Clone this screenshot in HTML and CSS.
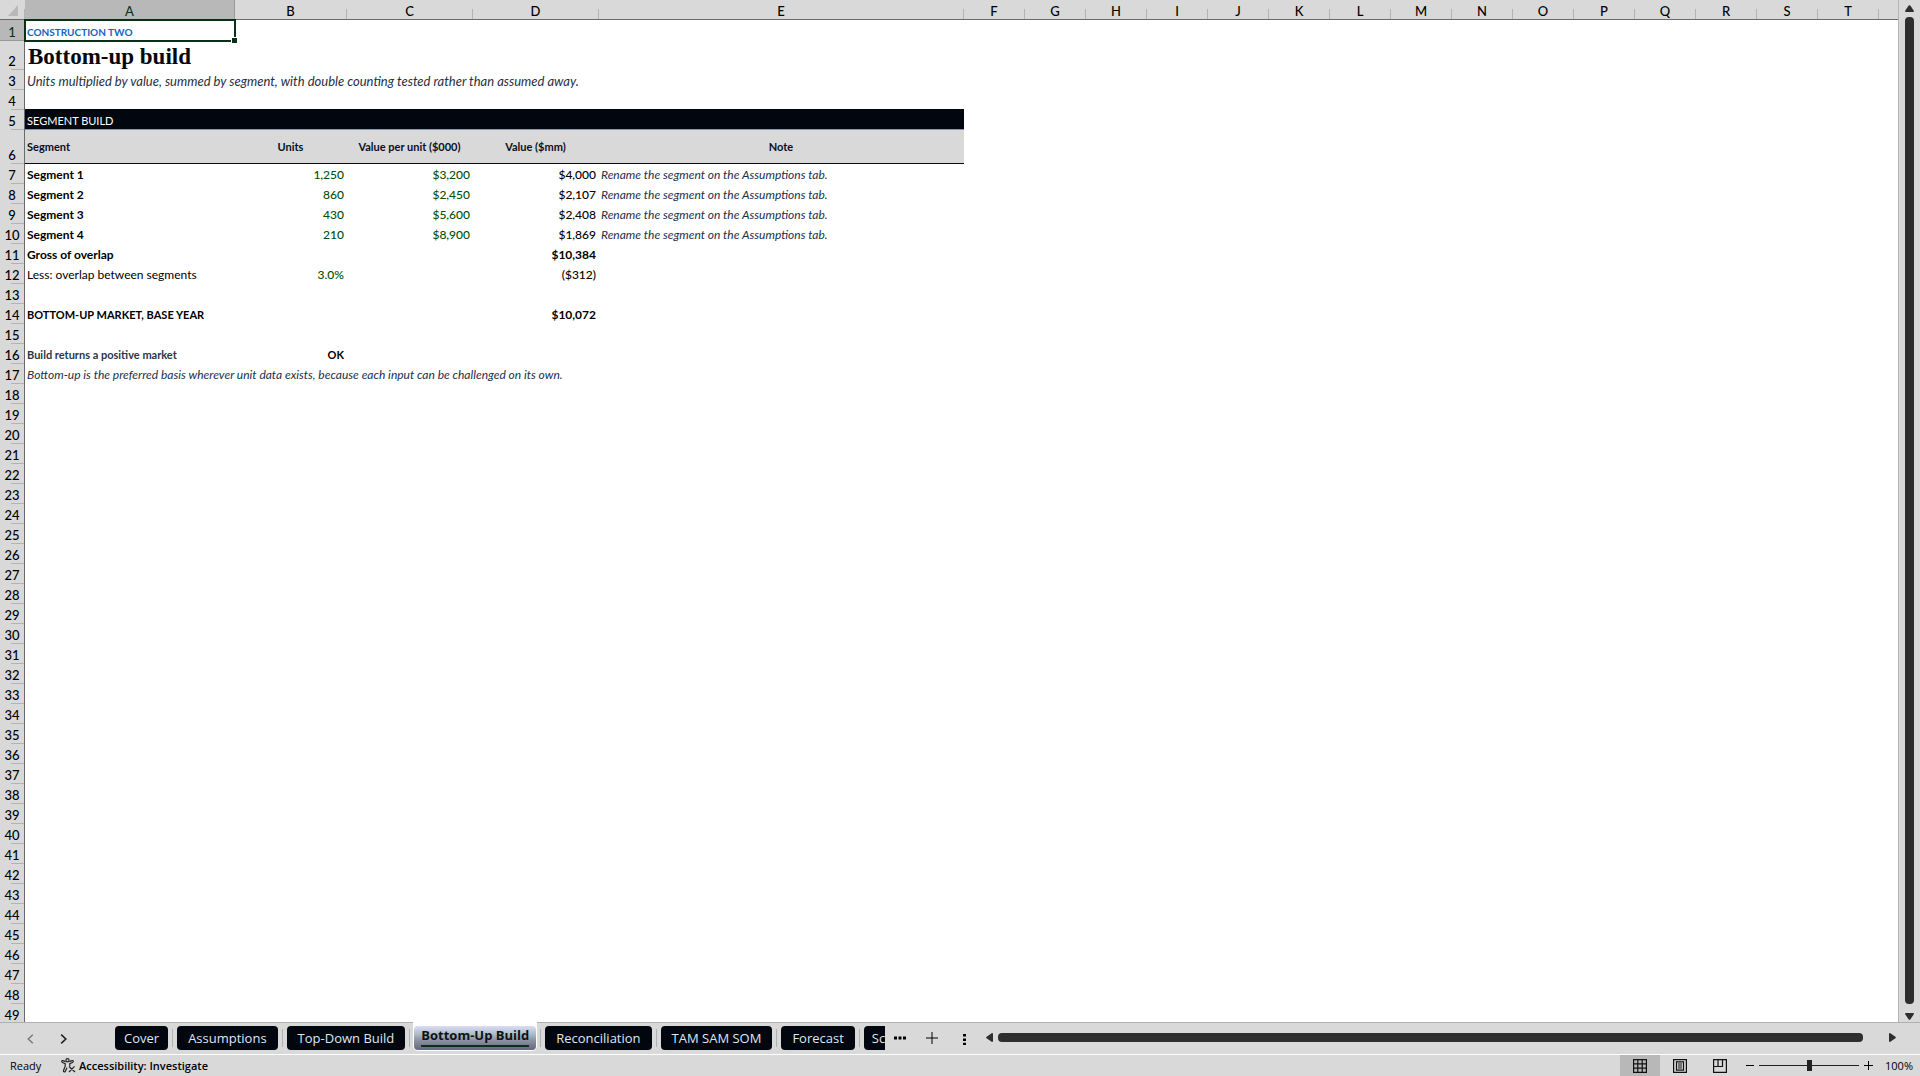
FILE: index.html
```
<!DOCTYPE html>
<html lang="en">
<head>
<meta charset="utf-8">
<title>Bottom-Up Build</title>
<link rel="stylesheet" href="styles.css">
</head>
<body>
<main class="workspace">
  <div class="sheet">
    <table class="grid">
      <colgroup>
        <col class="c-head"><col class="c-a"><col class="c-b"><col class="c-c"><col class="c-c"><col class="c-e">
        <col class="c-std" span="15"><col>
      </colgroup>
      <thead>
        <tr>
          <th class="corner"><svg width="10" height="11" viewBox="0 0 10 11"><path d="M10 0V11H0Z" fill="#b8b8b8"/></svg></th>
          <th class="selected">A</th><th>B</th><th>C</th><th>D</th><th>E</th><th>F</th><th>G</th><th>H</th><th>I</th><th>J</th><th>K</th><th>L</th><th>M</th><th>N</th><th>O</th><th>P</th><th>Q</th><th>R</th><th>S</th><th>T</th><th class="rest"></th>
        </tr>
      </thead>
      <tbody>
        <tr class="r-eyebrow"><th class="selected">1</th><td class="active-cell eyebrow">CONSTRUCTION TWO<span class="handle"></span></td><td colspan="20"></td></tr>
        <tr class="r-title"><th>2</th><td colspan="21" class="title">Bottom-up build</td></tr>
        <tr><th>3</th><td colspan="21" class="subtitle">Units multiplied by value, summed by segment, with double counting tested rather than assumed away.</td></tr>
        <tr><th>4</th><td colspan="21"></td></tr>
        <tr><th>5</th><td colspan="5" class="band">SEGMENT BUILD</td><td colspan="16"></td></tr>
        <tr class="r-heads"><th>6</th><td class="head first">Segment</td><td class="head">Units</td><td class="head">Value per unit ($000)</td><td class="head">Value ($mm)</td><td class="head">Note</td><td colspan="16"></td></tr>
        <tr><th>7</th><td class="strong">Segment 1</td><td class="num input">1,250</td><td class="num input">$3,200</td><td class="num">$4,000</td><td class="note">Rename the segment on the Assumptions tab.</td><td colspan="16"></td></tr>
        <tr><th>8</th><td class="strong">Segment 2</td><td class="num input">860</td><td class="num input">$2,450</td><td class="num">$2,107</td><td class="note">Rename the segment on the Assumptions tab.</td><td colspan="16"></td></tr>
        <tr><th>9</th><td class="strong">Segment 3</td><td class="num input">430</td><td class="num input">$5,600</td><td class="num">$2,408</td><td class="note">Rename the segment on the Assumptions tab.</td><td colspan="16"></td></tr>
        <tr><th>10</th><td class="strong">Segment 4</td><td class="num input">210</td><td class="num input">$8,900</td><td class="num">$1,869</td><td class="note">Rename the segment on the Assumptions tab.</td><td colspan="16"></td></tr>
        <tr><th>11</th><td class="strong">Gross of overlap</td><td></td><td></td><td class="num strong">$10,384</td><td colspan="17"></td></tr>
        <tr><th>12</th><td>Less: overlap between segments</td><td class="num input">3.0%</td><td></td><td class="num">($312)</td><td colspan="17"></td></tr>
        <tr><th>13</th><td colspan="21"></td></tr>
        <tr><th>14</th><td class="strong small">BOTTOM-UP MARKET, BASE YEAR</td><td></td><td></td><td class="num strong">$10,072</td><td colspan="17"></td></tr>
        <tr><th>15</th><td colspan="21"></td></tr>
        <tr><th>16</th><td class="check">Build returns a positive market</td><td class="num strong small">OK</td><td colspan="19"></td></tr>
        <tr><th>17</th><td colspan="21" class="note">Bottom-up is the preferred basis wherever unit data exists, because each input can be challenged on its own.</td></tr>
        <tr><th>18</th><td colspan="21"></td></tr>
        <tr><th>19</th><td colspan="21"></td></tr>
        <tr><th>20</th><td colspan="21"></td></tr>
        <tr><th>21</th><td colspan="21"></td></tr>
        <tr><th>22</th><td colspan="21"></td></tr>
        <tr><th>23</th><td colspan="21"></td></tr>
        <tr><th>24</th><td colspan="21"></td></tr>
        <tr><th>25</th><td colspan="21"></td></tr>
        <tr><th>26</th><td colspan="21"></td></tr>
        <tr><th>27</th><td colspan="21"></td></tr>
        <tr><th>28</th><td colspan="21"></td></tr>
        <tr><th>29</th><td colspan="21"></td></tr>
        <tr><th>30</th><td colspan="21"></td></tr>
        <tr><th>31</th><td colspan="21"></td></tr>
        <tr><th>32</th><td colspan="21"></td></tr>
        <tr><th>33</th><td colspan="21"></td></tr>
        <tr><th>34</th><td colspan="21"></td></tr>
        <tr><th>35</th><td colspan="21"></td></tr>
        <tr><th>36</th><td colspan="21"></td></tr>
        <tr><th>37</th><td colspan="21"></td></tr>
        <tr><th>38</th><td colspan="21"></td></tr>
        <tr><th>39</th><td colspan="21"></td></tr>
        <tr><th>40</th><td colspan="21"></td></tr>
        <tr><th>41</th><td colspan="21"></td></tr>
        <tr><th>42</th><td colspan="21"></td></tr>
        <tr><th>43</th><td colspan="21"></td></tr>
        <tr><th>44</th><td colspan="21"></td></tr>
        <tr><th>45</th><td colspan="21"></td></tr>
        <tr><th>46</th><td colspan="21"></td></tr>
        <tr><th>47</th><td colspan="21"></td></tr>
        <tr><th>48</th><td colspan="21"></td></tr>
        <tr><th>49</th><td colspan="21"></td></tr>
      </tbody>
    </table>
  </div>
  <div class="vscroll">
    <button type="button" aria-label="Scroll up"><svg width="9" height="7" viewBox="0 0 9 7"><path d="M3.7 .6Q4.5-.3 5.3 .6L9 6Q9 7 8 7H1Q0 7 0 6Z"/></svg></button>
    <div class="vthumb"></div>
    <button type="button" aria-label="Scroll down"><svg width="9" height="7" viewBox="0 0 9 7"><path d="M3.7 6.4Q4.5 7.3 5.3 6.4L9 1Q9 0 8 0H1Q0 0 0 1Z"/></svg></button>
  </div>
</main>

<nav class="tabbar" aria-label="Sheets">
  <div class="tabnav">
    <button type="button" aria-label="Previous sheet"><svg width="7" height="10" viewBox="0 0 7 10"><path d="M5.8 .7 1.2 5l4.6 4.3" fill="none" stroke="#777" stroke-width="1.4"/></svg></button>
    <button type="button" aria-label="Next sheet"><svg width="7" height="10" viewBox="0 0 7 10"><path d="M1.2 .7 5.8 5 1.2 9.3" fill="none" stroke="#222" stroke-width="1.6"/></svg></button>
  </div>
  <div class="tabs">
    <button type="button" class="tab">Cover</button>
    <i class="sep"></i>
    <button type="button" class="tab">Assumptions</button>
    <i class="sep"></i>
    <button type="button" class="tab">Top-Down Build</button>
    <i class="sep"></i>
    <button type="button" class="tab current"><span>Bottom-Up Build</span></button>
    <i class="sep"></i>
    <button type="button" class="tab">Reconciliation</button>
    <i class="sep"></i>
    <button type="button" class="tab">TAM SAM SOM</button>
    <i class="sep"></i>
    <button type="button" class="tab">Forecast</button>
    <i class="sep"></i>
    <button type="button" class="tab cut">Sc</button>
  </div>
  <div class="tabtools">
    <button type="button" aria-label="More sheets"><svg width="12" height="4" viewBox="0 0 12 4"><path d="M0 .5h3v3H0zM4.500 .5h3v3h-3zM9 .5h3v3H9z"/></svg></button>
    <button type="button" aria-label="New sheet"><svg width="12" height="12" viewBox="0 0 12 12"><path d="M5.500 0h1v5.500H12v1H6.500V12h-1V6.500H0v-1h5.500z"/></svg></button>
    <button type="button" aria-label="Resize tab area"><svg width="3" height="11" viewBox="0 0 3 11"><path d="M0 0h3v2.500H0zM0 4.500h3V7H0zM0 8.800h3V11H0z"/></svg></button>
  </div>
  <div class="hscroll">
    <button type="button" aria-label="Scroll left"><svg width="7" height="9" viewBox="0 0 7 9"><path d="M.6 3.700Q-.3 4.500 .6 5.300L6 9Q7 9 7 8V1Q7 0 6 0Z"/></svg></button>
    <div class="hthumb"></div>
    <button type="button" aria-label="Scroll right"><svg width="7" height="9" viewBox="0 0 7 9"><path d="M6.400 3.700Q7.300 4.500 6.400 5.300L1 9Q0 9 0 8V1Q0 0 1 0Z"/></svg></button>
  </div>
</nav>

<footer class="status">
  <span class="ready">Ready</span>
  <button type="button" class="access">
    <svg width="15" height="15" viewBox="0 0 15 15" fill="none" stroke="#222" stroke-width="1.200"><circle cx="6.500" cy="2.300" r="1.600"/><path d="M4.600 3.600 2 2.600Q.6 2.500.7 3.600q0 .6.800.9L4.200 5.600v2.600L2.500 12.400q-.3 1.200.7 1.500.9.200 1.300-.8L6 9.800M8.400 3.600 11 2.600q1.400-.1 1.300 1 0 .6-.8.900L8.800 5.600v2.300M8 8.500l6 5.500M13.500 8.300 8 14"/></svg>
    Accessibility: Investigate
  </button>
  <div class="views">
    <button type="button" class="on" aria-label="Normal"><svg width="14" height="14" viewBox="0 0 14 14" fill="none" stroke="#111" stroke-width="1.200"><path d="M.6.600h12.800v12.800H.6zM4.800.600v12.800M9.200.600v12.800M.6 4.800h12.800M.6 9.200h12.800"/></svg></button>
    <button type="button" aria-label="Page layout"><svg width="14" height="14" viewBox="0 0 14 14" fill="none" stroke="#111" stroke-width="1.200"><path d="M.6.600h12.800v12.800H.6zM3.500 2.800h7v8.400h-7zM5 5h4M5 7h4M5 9h4"/></svg></button>
    <button type="button" aria-label="Page break preview"><svg width="14" height="14" viewBox="0 0 14 14" fill="none" stroke="#111" stroke-width="1.200"><path d="M.6.600h12.800v12.800H.6zM.6 7.500h8.900V.600M5 .600v6.900"/></svg></button>
  </div>
  <div class="zoom">
    <button type="button" aria-label="Zoom out"><svg width="8" height="9" viewBox="0 0 8 9"><path d="M0 4h8v1H0z"/></svg></button>
    <input type="range" min="0" max="200" value="100" aria-label="Zoom">
    <button type="button" aria-label="Zoom in"><svg width="9" height="9" viewBox="0 0 9 9"><path d="M4 0h1v4h4v1H5v4H4V5H0V4h4z"/></svg></button>
  </div>
  <button type="button" class="percent">100%</button>
</footer>
</body>
</html>
```
FILE: styles.css
```
* { box-sizing: border-box; }

body {
  margin: 0;
  height: 100vh;
  display: flex;
  flex-direction: column;
  background: #d9d9d9;
  color: #000;
  font: 12px/18px Lato, sans-serif;
  overflow: hidden;
}

button {
  border: 0;
  padding: 0;
  background: none;
  color: inherit;
  font: inherit;
  white-space: nowrap;
}

svg { display: block; }

/* Worksheet */
.workspace {
  flex: 1;
  min-height: 0;
  display: flex;
}

.sheet {
  flex: 1;
  min-width: 0;
  overflow: hidden;
  background: linear-gradient(#d9d9d9, #d9d9d9) 0 0 / 100% 19px no-repeat #fff;
  border-right: 1px solid #b5b5b5;
}

.grid {
  width: 100%;
  table-layout: fixed;
  border-collapse: separate;
  border-spacing: 0;
}

.c-head { width: 25px; }
.c-a { width: 210px; }
.c-b { width: 112px; }
.c-c { width: 126px; }
.c-e { width: 365px; }
.c-std { width: 61px; }

.grid th {
  padding: 0 1px 0 0;
  font-size: 13px;
  font-weight: 500;
  text-align: center;
  vertical-align: bottom;
  background-color: #d9d9d9;
  background-repeat: no-repeat;
  background-image: linear-gradient(#b3b3b3, #b3b3b3);
}

.grid thead th {
  height: 20px;
  background-position: right bottom;
  background-size: 1px 11px;
  box-shadow: inset 0 -1px #6a6a6a;
}

.grid tbody th {
  background-position: right bottom;
  background-size: 14px 1px;
  box-shadow: inset -1px 0 #6a6a6a;
}

.grid thead th.rest { background-image: none; }
.grid .selected { background-color: #b8b8b8; color: #0b3018; }
.grid thead .selected { background-size: 1px 100%; background-image: linear-gradient(#999, #999); }
.grid tbody .selected { background-size: 100% 1px; background-image: linear-gradient(#999, #999); }
.corner svg { margin: 0 0 4px 8px; }

.grid td {
  height: 20px;
  padding: 0 3px 0 2px;
  vertical-align: bottom;
  white-space: nowrap;
}

.grid .r-eyebrow td { height: 21px; }
.grid .r-title td { height: 29px; }
.grid .r-heads td { height: 34px; }

.grid .eyebrow { color: #1463c4; font-size: 10px; font-weight: 700; }
.grid .title { font: 700 23px/26px "Liberation Serif", serif; color: #05070f; padding-left: 3px; }
.grid .subtitle { font-size: 13px; font-style: italic; color: #26303f; }
.grid .band { background: #02070f; color: #fff; font-size: 11px; box-shadow: inset 0 -1px #8494a8, 0 -1px #02070f; }
.grid .head {
  background: #d9d9d9;
  box-shadow: inset 0 -1px #0a0a1e;
  color: #0a0f24;
  font-size: 11px;
  font-weight: 700;
  text-align: center;
  vertical-align: middle;
}
.grid .head.first { text-align: left; }
.grid .strong { font-weight: 700; color: #000; }
.grid .small { font-size: 11px; }
.grid .num { text-align: right; font-weight: 500; }
.grid .num.strong { font-weight: 700; }
.grid .input { color: #00500a; }
.grid .note { font-style: italic; color: #22304a; }
.grid .check { font-size: 11px; font-weight: 700; color: #2b3548; }

.active-cell { position: relative; }
.active-cell::after {
  content: "";
  position: absolute;
  inset: -1px;
  border: 2px solid #0a3018;
}
.handle {
  position: absolute;
  right: -3px;
  bottom: -3px;
  z-index: 1;
  width: 7px;
  height: 7px;
  border: 1px solid #fff;
  background: #0a3018;
}

/* Scroll bars */
.vscroll {
  flex: none;
  width: 21px;
  padding: 5px 0 2px;
  display: flex;
  flex-direction: column;
  align-items: center;
  gap: 5px;
}
.vthumb { flex: 1; width: 9px; margin-bottom: 4px; border-radius: 4px; background: #2e2e2e; }
.vscroll svg, .hscroll svg { fill: #2e2e2e; }

.hscroll {
  flex: 1;
  display: flex;
  align-items: center;
  padding: 0 24px 2px 20px;
}
.hthumb { flex: 1; height: 9px; margin: 0 26px 0 5px; border-radius: 4px; background: #2e2e2e; }

/* Sheet tabs */
.tabbar {
  flex: none;
  height: 33px;
  display: flex;
  align-items: center;
  border-top: 1px solid #b0b0b0;
  border-bottom: 1px solid #fff;
}
.tabnav { flex: none; width: 115px; padding-left: 27px; display: flex; gap: 26px; }

.tabs {
  flex: none;
  width: 770px;
  height: 33px;
  margin-top: -1px;
  display: flex;
  align-items: center;
  gap: 4px;
  overflow: hidden;
}
.tab {
  flex: none;
  height: 24px;
  padding: 0 11px;
  border-radius: 4px;
  background: #02070f;
  color: #dfe6f5;
  font: 13px/24px "Open Sans", sans-serif;
}
.tab:first-child { padding: 0 9px; }
.tab.cut {
  flex: 1;
  min-width: 0;
  padding: 0 0 0 8px;
  border-radius: 4px 0 0 4px;
  text-align: left;
}
.tab.current {
  height: 29px;
  margin: 0 -1px;
  padding: 4px 1px 1px;
  align-self: flex-start;
  border-radius: 0 0 5px 5px;
  background: #fff;
  color: #111;
  font-weight: 700;
}
.tab.current span {
  display: block;
  height: 24px;
  padding: 0 7px;
  border-radius: 4px;
  line-height: 18px;
  background:
    linear-gradient(#0a3018, #0a3018) center 19px / calc(100% - 14px) 2px no-repeat,
    linear-gradient(#dcdcf8, #a9bcc4 35%, #8b91a2 60%, #66667e);
}
.sep { flex: none; width: 1px; height: 18px; background: #b0b0b0; }

.tabtools { flex: none; display: flex; align-items: center; gap: 20px; padding: 0 0 2px 9px; }
.tabtools button:last-child { margin: 4px 0 0 5px; }

/* Status bar */
.status {
  flex: none;
  height: 21px;
  display: flex;
  align-items: center;
  font: 11px/20px "Open Sans", sans-serif;
}
.ready { width: 61px; padding-left: 10px; }
.access { display: flex; align-items: center; gap: 3px; font-weight: 600; }
.views { margin-left: auto; display: flex; align-self: stretch; }
.views button { width: 40px; display: grid; place-items: center; }
.views .on { background: #b8b8b8; }
.zoom { display: flex; align-items: center; gap: 5px; padding-left: 6px; }
.zoom input {
  appearance: none;
  width: 100px;
  height: 11px;
  margin: 0;
  background: linear-gradient(#222, #222) center / 100% 1px no-repeat;
}
.zoom input::-webkit-slider-thumb { appearance: none; width: 5px; height: 11px; background: #222; }
.percent { width: 47px; padding-right: 7px; text-align: right; }
```
